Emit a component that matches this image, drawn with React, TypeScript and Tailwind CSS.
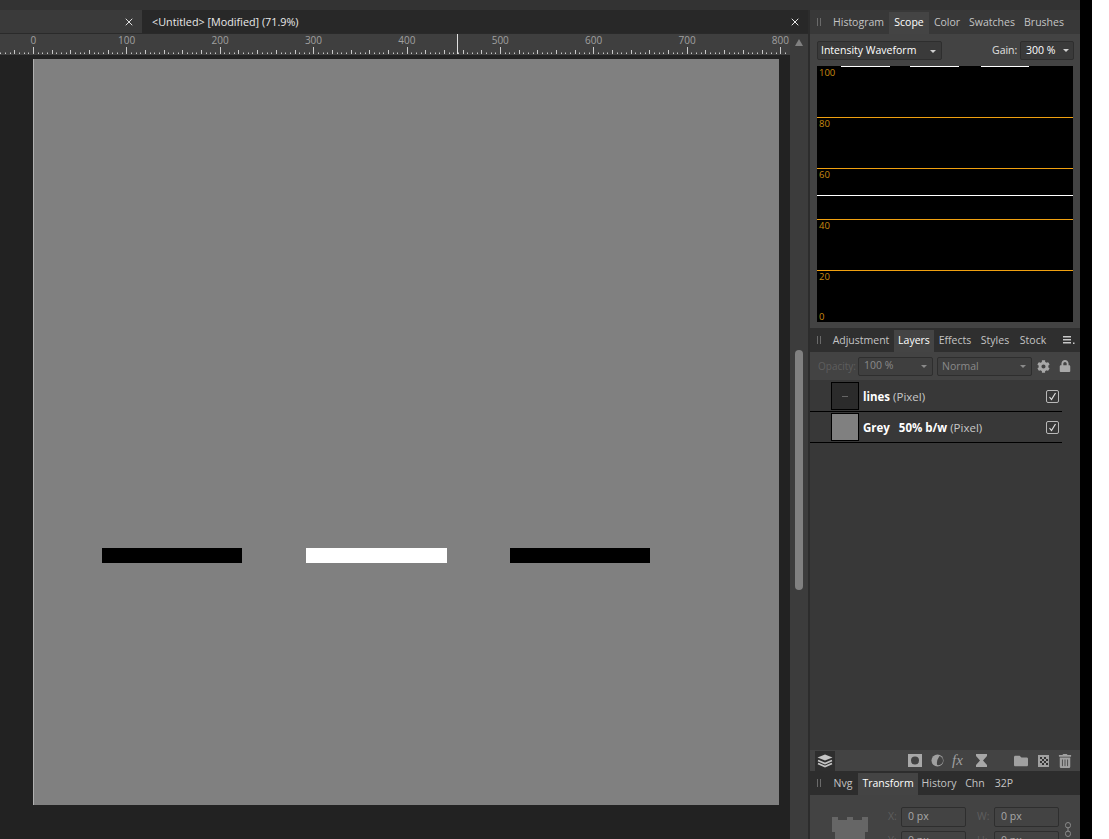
import { FaCog, FaFolder, FaLock, FaTrashAlt } from "react-icons/fa";
import { X } from "lucide-react";

const rulerLabels = [0, 100, 200, 300, 400, 500, 600, 700, 800];
const rulerTicks = Array.from({ length: 170 }, (_, i) => i * 5 - 35);
const scopeLabels = [
  { text: "100", top: "top-[0px]" },
  { text: "80", top: "top-[51px]" },
  { text: "60", top: "top-[102px]" },
  { text: "40", top: "top-[153px]" },
  { text: "20", top: "top-[204px]" },
  { text: "0", top: "top-[244px]" },
];

function Tab({ label, active, className }: { label: string; active?: boolean; className: string }) {
  return (
    <div
      className={`flex h-[22px] items-center justify-center pb-[1px] ${className} ${
        active ? "bg-[#444444] text-white" : "text-[#c4c4c4]"
      }`}
    >
      {label}
    </div>
  );
}

function Grip() {
  return (
    <div className="flex h-[22px] w-[18px] items-center justify-center gap-[2px] pb-[2px]">
      <div className="h-[8px] w-px bg-[#6a6a6a]" />
      <div className="h-[8px] w-px bg-[#6a6a6a]" />
    </div>
  );
}

function Caret({ color = "border-t-[#d0d0d0]" }: { color?: string }) {
  return <div className={`h-0 w-0 border-x-[3.5px] border-t-[3.5px] border-x-transparent ${color}`} />;
}

function Ruler() {
  return (
    <div className="relative h-[21px] overflow-hidden bg-[#3f3f3f]">
      <div className="-ml-[13.4px] flex h-[13px] items-center text-[10px] text-[#a0a0a0]">
        {rulerLabels.map((n) => (
          <div key={n} className="w-[93.4px] shrink-0 text-center">
            {n}
          </div>
        ))}
      </div>
      <svg width="790" height="8" className="block">
        {rulerTicks.map((u) => {
          const x = Math.round(33 + u * 0.934) + 0.5;
          const h = u % 100 === 0 ? 7 : u % 20 === 0 ? 4 : 1.5;
          return <line key={u} x1={x} x2={x} y1={7 - h} y2={7} stroke="#c8c8c8" strokeWidth="1" />;
        })}
      </svg>
      <div className="absolute left-[457px] top-0 h-[20px] w-px bg-[#e0e0e0]" />
    </div>
  );
}

function Scope() {
  return (
    <div className="relative h-[256px] w-[256px] bg-black">
      <svg width="256" height="256" className="absolute left-0 top-0">
        <rect x="24" y="0" width="49" height="1" fill="#fff" />
        <rect x="93" y="0" width="49" height="1" fill="#fff" />
        <rect x="164" y="0" width="48" height="1" fill="#fff" />
        <rect x="0" y="51" width="256" height="1" fill="#f0a010" />
        <rect x="0" y="102" width="256" height="1" fill="#f0a010" />
        <rect x="0" y="129" width="256" height="1" fill="#ffffff" />
        <rect x="0" y="153" width="256" height="1" fill="#f0a010" />
        <rect x="0" y="204" width="256" height="1" fill="#f0a010" />
      </svg>
      {scopeLabels.map((l) => (
        <div key={l.text} className={`absolute left-[2px] ${l.top} text-[9.5px] leading-[13px] text-[#c88a10]`}>
          {l.text}
        </div>
      ))}
    </div>
  );
}

function LayerRow({ name, thumb, line }: { name: string; thumb: "dark" | "grey"; line?: boolean }) {
  return (
    <div className="flex h-[31px] w-[252px] items-center border-b border-black pl-[21px]">
      <div
        className={`flex h-[28px] w-[28px] items-center justify-center border border-black ${
          thumb === "dark" ? "bg-[#2b2b2b]" : "bg-[#808080]"
        }`}
      >
        {line && <div className="h-px w-[6px] bg-[#666666]" />}
      </div>
      <div className="ml-[4px] flex-1 whitespace-pre pt-[2px] text-[11.5px] text-[#c8c8c8]">
        <span className="font-bold text-white">{name}</span> (Pixel)
      </div>
      <div className="mr-[3px] flex h-[13px] w-[13px] items-center justify-center rounded-[2px] border border-[#b8b8b8]">
        <svg width="9" height="9" viewBox="0 0 9 9" fill="none" stroke="#e0e0e0" strokeWidth="1.2">
          <path d="M1.5 5 L3.5 7.5 L7.5 1" />
        </svg>
      </div>
    </div>
  );
}

function ToolbarIcons() {
  return (
    <div className="flex h-[21px] shrink-0 items-center bg-[#434343]">
      <div className="ml-[5px] flex h-[20px] w-[20px] items-center justify-center bg-[#2e2e2e]">
        <svg width="16" height="14" viewBox="0 0 16 14" fill="none" stroke="#c4c4c4" strokeWidth="1.8">
          <path d="M8 0.5 L15.5 3.5 L8 6.5 L0.5 3.5 Z" fill="#c4c4c4" stroke="none" />
          <path d="M1 6.5 L8 9.5 L15 6.5" />
          <path d="M1 9.5 L8 12.5 L15 9.5" />
        </svg>
      </div>
      <svg width="14" height="13" viewBox="0 0 14 13" className="ml-[73px]">
        <rect width="14" height="13" fill="#a8a8a8" />
        <circle cx="7" cy="6.5" r="4" fill="#434343" />
      </svg>
      <svg width="13" height="13" viewBox="0 0 13 13" className="ml-[9px]">
        <circle cx="6.5" cy="6.5" r="6" fill="#a0a0a0" />
        <path d="M8.5 2 Q5 7 6.2 11 A4.6 4.6 0 0 0 8.5 2 Z" fill="#434343" />
      </svg>
      <div className="ml-[8px] w-[16px] font-['Liberation_Serif',serif] text-[15px] italic leading-none text-[#a0a0a0]">fx</div>
      <svg width="11" height="13" viewBox="0 0 11 13" className="ml-[8px]">
        <path d="M0 0 H11 V2 L7 6.5 L11 11 V13 H0 V11 L4 6.5 L0 2 Z" fill="#a8a8a8" />
      </svg>
      <FaFolder className="ml-[27px] text-[14px] text-[#a0a0a0]" />
      <svg width="11" height="12" viewBox="0 0 11 12" className="ml-[10px]">
        <rect width="11" height="12" fill="#a0a0a0" />
        <path d="M2 2h2v2H2zM6 2h2v2H6zM4 4h2v2H4zM8 4h2v2H8zM2 6h2v2H2zM6 6h2v2H6zM4 8h2v2H4zM8 8h2v2H8z" fill="#333333" />
      </svg>
      <FaTrashAlt className="ml-[9px] text-[14px] text-[#a0a0a0]" />
    </div>
  );
}

function TransformBody() {
  return (
    <div className="flex h-[44px] shrink-0 overflow-hidden bg-[#434343] text-[#a8a8a8]">
      <svg width="36" height="40" viewBox="0 0 36 40" className="ml-[22px] mt-[22px] shrink-0">
        <path
          d="M0 0H6V3H15V0H21V3H30V0H36V15H33V25H36V40H0V25H3V15H0Z"
          fill="#666666"
        />
      </svg>
      <div className="ml-[20px] mt-[12px] flex flex-col gap-[4px]">
        <div className="flex items-center">
          <span className="w-[13px] text-[#5e5e5e]">X:</span>
          <div className="flex h-[20px] w-[65px] items-center rounded-[2px] border border-[#2e2e2e] pl-[6px]">0 px</div>
          <span className="ml-[11px] w-[17px] text-[#5e5e5e]">W:</span>
          <div className="flex h-[20px] w-[65px] items-center rounded-[2px] border border-[#2e2e2e] pl-[6px]">0 px</div>
        </div>
        <div className="flex items-center">
          <span className="w-[13px] text-[#5e5e5e]">Y:</span>
          <div className="flex h-[20px] w-[65px] items-center rounded-[2px] border border-[#2e2e2e] pl-[6px]">0 px</div>
          <span className="ml-[11px] w-[17px] text-[#5e5e5e]">H:</span>
          <div className="flex h-[20px] w-[65px] items-center rounded-[2px] border border-[#2e2e2e] pl-[6px]">0 px</div>
        </div>
      </div>
      <svg width="6" height="15" viewBox="0 0 6 15" fill="none" stroke="#8a8a8a" className="ml-[6px] mt-[27px] shrink-0">
        <rect x="0.5" y="0.5" width="5" height="5.5" rx="2.5" />
        <rect x="0.5" y="9" width="5" height="5.5" rx="2.5" />
        <path d="M3 5V10" />
      </svg>
    </div>
  );
}

export default function App() {
  return (
    <div className="flex h-[839px] w-[1109px] overflow-hidden bg-white font-['Open_Sans',sans-serif] text-[10.5px]">
      <div className="flex w-[1080px] shrink-0 flex-col bg-[#333333]">
        <div className="h-[10px] shrink-0 bg-[#333333]" />
        <div className="flex min-h-0 flex-1">
          {/* document area */}
          <div className="flex w-[808px] shrink-0 flex-col">
            <div className="flex h-[24px] shrink-0 border-b border-[#2a2a2a] bg-[#282828]">
              <div className="flex w-[142px] items-center justify-end bg-[#3a3a3a] pr-[7px] text-[#e0e0e0]">
                <X size={12} strokeWidth={2} />
              </div>
              <div className="ml-[10px] flex-1 text-[10.8px] leading-[24px] text-[#e8e8e8]">{"<Untitled> [Modified] (71.9%)"}</div>
              <div className="flex items-center pr-[7px] text-[#e8e8e8]">
                <X size={12} strokeWidth={2} />
              </div>
            </div>
            <div className="flex min-h-0 flex-1">
              <div className="flex w-[790px] shrink-0 flex-col bg-[#222222]">
                <Ruler />
                <div className="pl-[33px] pt-[4px]">
                  <div className="h-[746px] w-[746px] border-l border-[#b0b0b0] bg-[#808080] pl-[68px] pt-[489px]">
                    <div className="flex">
                      <div className="h-[15px] w-[140px] bg-black" />
                      <div className="ml-[64px] h-[15px] w-[141px] bg-white" />
                      <div className="ml-[63px] h-[15px] w-[140px] bg-black" />
                    </div>
                  </div>
                </div>
              </div>
              <div className="flex w-[18px] shrink-0 flex-col items-center bg-[#3c3c3c] pt-[5px]">
                <div className="h-0 w-0 border-x-[4px] border-b-[7px] border-x-transparent border-b-[#808080]" />
                <div className="mt-[304px] h-[240px] w-[8px] rounded-[4px] bg-[#808080]" />
              </div>
            </div>
          </div>

          {/* studio panels */}
          <div className="flex w-[272px] shrink-0 flex-col border-l-2 border-[#2c2c2c]">
            <div className="flex h-[24px] shrink-0 items-end bg-[#383838]">
              <Grip />
              <Tab label="Histogram" className="w-[61px]" />
              <Tab label="Scope" active className="w-[40px]" />
              <Tab label="Color" className="w-[36px]" />
              <Tab label="Swatches" className="w-[54px]" />
              <Tab label="Brushes" className="w-[50px]" />
            </div>
            <div className="flex h-[294px] shrink-0 flex-col bg-[#434343] pl-[7px]">
              <div className="mt-[7px] flex h-[19px] items-center">
                <div className="flex h-[19px] w-[125px] items-center justify-between rounded-[2px] border border-[#2e2e2e] bg-[#3a3a3a] pl-[3px] pr-[5px] pt-[1px] text-white">
                  Intensity Waveform
                  <Caret />
                </div>
                <span className="ml-[50px] w-[28px] text-[#e0e0e0]">Gain:</span>
                <div className="flex h-[19px] w-[54px] items-center justify-between rounded-[2px] border border-[#2e2e2e] bg-[#3a3a3a] pl-[5px] pr-[4px] text-white">
                  300 %
                  <Caret />
                </div>
              </div>
              <div className="mt-[6px]">
                <Scope />
              </div>
            </div>

            <div className="flex h-[24px] shrink-0 items-end bg-[#2f2f2f]">
              <Grip />
              <Tab label="Adjustment" className="w-[66px]" />
              <Tab label="Layers" active className="w-[40px]" />
              <Tab label="Effects" className="w-[42px]" />
              <Tab label="Styles" className="w-[38px]" />
              <Tab label="Stock" className="w-[38px]" />
              <svg width="12" height="8" viewBox="0 0 12 8" className="mb-[8px] ml-[11px]">
                <path d="M0 0h8v1.5H0zM0 3h8v1.5H0zM0 6h8v1.5H0zM10 6.5h1.5V8H10z" fill="#c8c8c8" />
              </svg>
            </div>
            <div className="flex h-[28px] shrink-0 items-center bg-[#434343] text-[#5e5e5e]">
              <span className="ml-[8px] w-[40px] text-[10px]">Opacity:</span>
              <div className="flex h-[19px] w-[75px] items-center justify-between rounded-[2px] border border-[#2e2e2e] bg-[#3f3f3f] pl-[5px] pr-[5px] text-[#8a8a8a]">
                100 %
                <Caret color="border-t-[#8a8a8a]" />
              </div>
              <div className="ml-[4px] flex h-[19px] w-[95px] items-center justify-between rounded-[2px] border border-[#2e2e2e] bg-[#3f3f3f] pl-[4px] pr-[5px] pt-[1px] text-[#8a8a8a]">
                Normal
                <Caret color="border-t-[#8a8a8a]" />
              </div>
              <FaCog className="ml-[5px] text-[13px] text-[#a8a8a8]" />
              <FaLock className="ml-[9px] text-[12px] text-[#a8a8a8]" />
            </div>
            <div className="flex min-h-0 flex-1 flex-col bg-[#383838] pt-[1px]">
              <LayerRow name="lines" thumb="dark" line />
              <LayerRow name="Grey   50% b/w" thumb="grey" />
            </div>
            <ToolbarIcons />
            <div className="flex h-[24px] shrink-0 items-end bg-[#2d2d2d]">
              <Grip />
              <Tab label="Nvg" className="w-[30px]" />
              <Tab label="Transform" active className="w-[60px]" />
              <Tab label="History" className="w-[42px]" />
              <Tab label="Chn" className="w-[30px]" />
              <Tab label="32P" className="w-[28px]" />
            </div>
            <TransformBody />
          </div>
        </div>
      </div>
      <div className="w-[12px] shrink-0 bg-black" />
    </div>
  );
}
